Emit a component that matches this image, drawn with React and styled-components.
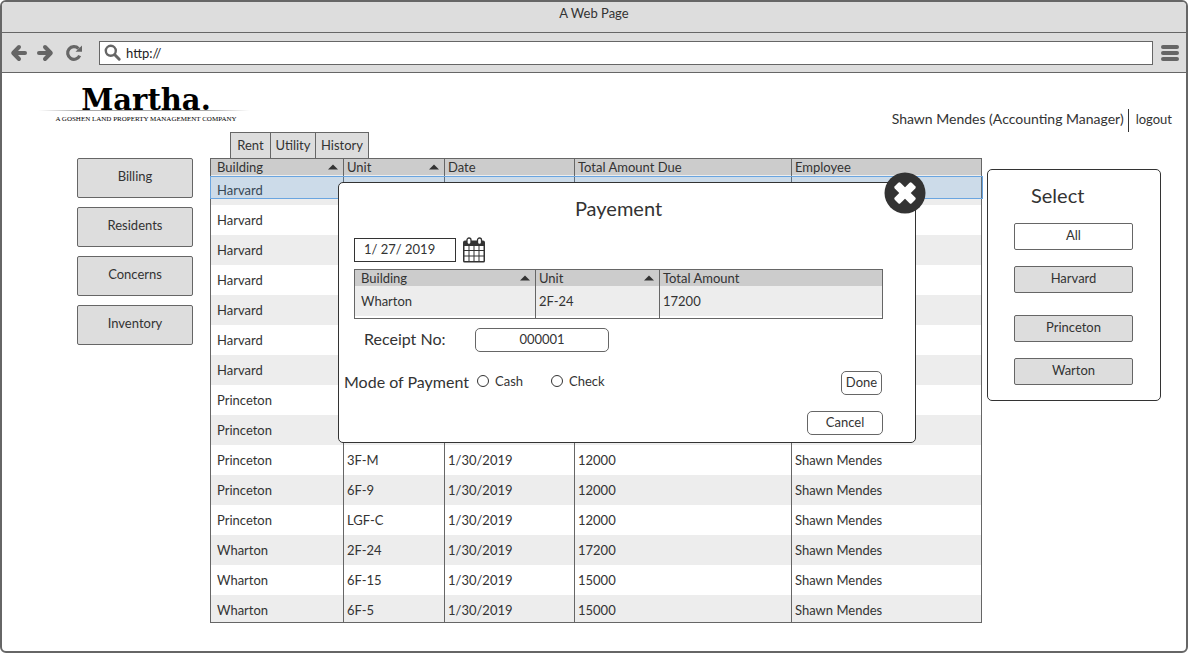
import React, { useState } from 'react';
import styled, { createGlobalStyle } from 'styled-components';

const Global = createGlobalStyle`
  *, *::before, *::after { box-sizing: border-box; }
  body { margin: 0; background: #fff; color: #333; font: 13px/16px Lato, "Liberation Sans", sans-serif; }
  button, input { font: inherit; color: inherit; margin: 0; }
  svg { display: block; }
`;

const Browser = styled.div`
  min-height: 100vh;
  border: 2px solid #666;
  border-radius: 6px;
  background: #fff;
  overflow: hidden;
`;
const TitleBar = styled.div`
  height: 31px;
  padding-top: 3px;
  text-align: center;
  background: #ddd;
  border-bottom: 1px solid #666;
`;
const Toolbar = styled.div`
  height: 40px;
  padding: 0 7px 0 8px;
  display: flex;
  align-items: center;
  gap: 8px;
  background: #ddd;
  border-bottom: 1px solid #666;
`;
const IconButton = styled.button`
  border: 0;
  padding: 0;
  background: none;
  color: #666;
  flex: none;
`;
const Reload = styled(IconButton)`
  margin: 0 8px 0 3px;
`;
const Address = styled.label`
  flex: 1;
  height: 24px;
  padding-left: 4px;
  display: flex;
  align-items: center;
  gap: 4px;
  color: #666;
  background: #fff;
  border: 1px solid #666;
  input { flex: 1; border: 0; padding: 0; outline: 0; background: none; color: #222; }
`;

const Header = styled.header`
  height: 59px;
  padding: 0 14px 0 36px;
  display: flex;
  justify-content: space-between;
  align-items: flex-end;
`;
const Logo = styled.div`
  width: 212px;
  padding-bottom: 9px;
  text-align: center;
  color: #000;
`;
const LogoName = styled.div`
  padding-left: 4px;
  font-family: "DejaVu Serif", serif;
  font-size: 29px;
  line-height: 20px;
  font-weight: 700;
`;
const LogoRule = styled.div`
  height: 1px;
  margin-bottom: 4px;
  background: linear-gradient(90deg, transparent, #aaa 20%, #aaa 80%, transparent);
`;
const LogoTag = styled.div`
  padding-left: 4px;
  font-family: "Liberation Serif", serif;
  font-size: 7px;
  line-height: 8px;
  white-space: nowrap;
`;
const Account = styled.div`
  display: flex;
  height: 23px;
  line-height: 20px;
  a { color: inherit; text-decoration: none; margin-left: 4px; padding-left: 7px; border-left: 1px solid #333; }
`;
const UserName = styled.span`
  font-size: 14px;
`;

const Main = styled.main`
  padding: 0 25px 28px 75px;
  display: flex;
  align-items: flex-start;
`;
const SideNav = styled.nav`
  width: 116px;
  margin: 26px 17px 0 0;
  display: flex;
  flex-direction: column;
  gap: 9px;
`;
const GreyButton = styled.button`
  height: ${p => (p.$tall ? 40 : 27)}px;
  padding: 0 0 4px;
  background: ${p => (p.$active ? '#fff' : '#ddd')};
  border: 1px solid #666;
  border-radius: 2px;
`;
const Records = styled.section`
  flex: 1;
  min-width: 0;
`;
const Tabs = styled.div`
  display: flex;
  padding-left: 20px;
`;
const Tab = styled.button`
  width: ${p => p.$width}px;
  height: 26px;
  padding: 0 0 2px;
  background: #ddd;
  border: 1px solid #666;
  border-width: 1px 1px 0 0;
  &:first-child { border-left-width: 1px; }
`;
const Stage = styled.div`
  position: relative;
`;
const TableBox = styled.div`
  border: 1px solid #666;
  overflow: hidden;
`;
const Table = styled.table`
  width: 100%;
  table-layout: fixed;
  border-spacing: 0;
  margin-bottom: ${p => p.$trim || 0}px;
  th, td { padding: 0 3px; text-align: left; font-weight: 400; border-right: 1px solid #666; white-space: nowrap; }
  th:first-child, td:first-child { padding-left: 6px; }
  th:last-child, td:last-child { border-right: 0; }
  th { height: 16px; padding-right: 5px; background: #ccc; }
  td { height: 30px; }
  tbody tr:nth-child(odd) { background: #ededed; }
`;
const HeadCell = styled.span`
  display: flex;
  align-items: center;
  justify-content: space-between;
`;
const Highlight = styled.div`
  position: absolute;
  top: 18px;
  left: 0;
  right: -1px;
  height: 23px;
  background: rgba(77, 152, 222, .2);
  border: 1px solid #6aa5e0;
`;

const Dialog = styled.form`
  position: absolute;
  top: 24px;
  left: 128px;
  right: 66px;
  padding: 14px 32px 7px 15px;
  background: #fff;
  border: 1px solid #333;
  border-radius: 5px;
`;
const DialogTitle = styled.h2`
  margin: 0;
  font-size: 20px;
  line-height: 22px;
  font-weight: 400;
  text-align: center;
`;
const Close = styled(IconButton)`
  position: absolute;
  top: -11px;
  right: -11px;
`;
const DateRow = styled.div`
  display: flex;
  align-items: center;
  gap: 6px;
  margin: 18px 0 6px;
`;
const DateInput = styled.input`
  width: 102px;
  height: 24px;
  padding: 0 9px 2px;
  border: 1px solid #333;
  background: #fff;
`;
const SummaryBox = styled(TableBox)`
  td { height: 32px; padding-bottom: 2px; }
  tbody tr:last-child { background: linear-gradient(#ededed 30px, #fff 30px); }
`;
const ReceiptRow = styled.div`
  display: flex;
  align-items: center;
  margin-top: 9px;
  padding-left: 10px;
  label { width: 111px; padding-bottom: 2px; font-size: 16px; }
`;
const ReceiptInput = styled.input`
  width: 134px;
  height: 24px;
  padding: 0 0 2px;
  text-align: center;
  background: #fff;
  border: 1px solid #666;
  border-radius: 5px;
`;
const ModeRow = styled.fieldset`
  display: flex;
  align-items: center;
  margin: 19px 0 0 -10px;
  padding: 0;
  border: 0;
`;
const ModeLabel = styled.span`
  width: 133px;
  padding-bottom: 2px;
  font-size: 16px;
`;
const Choice = styled.label`
  width: 74px;
  display: flex;
  align-items: center;
  gap: 6px;
  padding-bottom: 4px;
`;
const Radio = styled.input`
  appearance: none;
  width: 12px;
  height: 12px;
  border: 1px solid #333;
  border-radius: 50%;
  background: #fff;
  &:checked { box-shadow: inset 0 0 0 2px #fff; background: #333; }
`;
const RoundButton = styled.button`
  width: ${p => p.$width}px;
  height: 24px;
  padding: 0 0 2px;
  background: #fff;
  border: 1px solid #666;
  border-radius: 5px;
`;
const DoneButton = styled(RoundButton)`
  margin: 0 1px 0 auto;
`;
const CancelRow = styled.div`
  display: flex;
  justify-content: flex-end;
  margin-top: 16px;
`;

const SelectPanel = styled.aside`
  width: 174px;
  margin: 37px 0 0 5px;
  padding: 14px 27px 15px 26px;
  display: flex;
  flex-direction: column;
  border: 1px solid #333;
  border-radius: 5px;
`;
const PanelTitle = styled.h2`
  margin: 0 0 17px;
  padding-left: 17px;
  font-size: 20px;
  line-height: 22px;
  font-weight: 400;
`;
const Group = styled.div`
  display: flex;
  flex-direction: column;
  gap: 16px;
  & + & { margin-top: 22px; }
`;

const ArrowIcon = ({ flip }) => (
  <svg width="18" height="18" viewBox="0 0 18 18" fill="none" stroke="currentColor" strokeWidth="4" strokeLinejoin="round" transform={flip ? 'scale(-1,1)' : undefined}>
    <path d="M9 3 3.200 9 9 15" strokeLinecap="round" />
    <path d="M4 9h11" strokeLinecap="round" />
  </svg>
);
const ReloadIcon = () => (
  <svg width="18" height="18" viewBox="0 0 18 18">
    <path d="M13.500 4.600A6.300 6.300 0 1 0 14.700 11.600" fill="none" stroke="currentColor" strokeWidth="3.200" />
    <path d="M17 1.500v6.300H10.500z" fill="currentColor" />
  </svg>
);
const SearchIcon = () => (
  <svg width="18" height="18" viewBox="0 0 18 18" fill="none" stroke="currentColor">
    <circle cx="6.800" cy="6.800" r="5" strokeWidth="2.400" />
    <path d="m10.800 10.800 4.400 4.400" strokeWidth="3" strokeLinecap="round" />
  </svg>
);
const MenuIcon = () => (
  <svg width="18" height="18" viewBox="0 0 18 18" stroke="currentColor" strokeWidth="4" strokeLinecap="round">
    <path d="M2 3h14M2 9h14M2 15h14" />
  </svg>
);
const CalendarIcon = () => (
  <svg width="24" height="26" viewBox="0 0 24 26">
    <path d="M3 3.500h18a2 2 0 0 1 2 2V24a1.500 1.500 0 0 1-1.500 1.500h-19A1.500 1.500 0 0 1 1 24V5.500a2 2 0 0 1 2-2z" fill="#333" />
    <path d="M2.500 9h4v4h-4zM7.500 9h4v4h-4zM12.500 9h4v4h-4zM17.500 9h4v4h-4zM2.500 14h4v4.500h-4zM7.500 14h4v4.500h-4zM12.500 14h4v4.500h-4zM17.500 14h4v4.500h-4zM2.500 19.500h4v4.500h-4zM7.500 19.500h4v4.500h-4zM12.500 19.500h4v4.500h-4zM17.500 19.500h4v4.500h-4z" fill="#fff" />
    <rect x="5" y="1" width="4" height="6.500" rx="2" fill="#fff" stroke="#333" strokeWidth="1.300" />
    <rect x="15.500" y="1" width="4" height="6.500" rx="2" fill="#fff" stroke="#333" strokeWidth="1.300" />
  </svg>
);
const CloseIcon = () => (
  <svg width="42" height="42" viewBox="0 0 42 42">
    <circle cx="21" cy="21" r="20.500" fill="#333" />
    <g fill="#fff" transform="rotate(45 21 21)">
      <rect x="9" y="17" width="24" height="8" rx="1.500" />
      <rect x="17" y="9" width="8" height="24" rx="1.500" />
    </g>
  </svg>
);
const SortIcon = () => (
  <svg width="10" height="6" viewBox="0 0 10 6"><path d="M0 5.500 5 .5l5 5z" fill="#333" /></svg>
);

const rows = [
  ...Array.from({ length: 7 }, () => ['Harvard', '', '', '', '']),
  ['Princeton', '', '', '', ''],
  ['Princeton', '', '', '', ''],
  ['Princeton', '3F-M', '1/30/2019', '12000', 'Shawn Mendes'],
  ['Princeton', '6F-9', '1/30/2019', '12000', 'Shawn Mendes'],
  ['Princeton', 'LGF-C', '1/30/2019', '12000', 'Shawn Mendes'],
  ['Wharton', '2F-24', '1/30/2019', '17200', 'Shawn Mendes'],
  ['Wharton', '6F-15', '1/30/2019', '15000', 'Shawn Mendes'],
  ['Wharton', '6F-5', '1/30/2019', '15000', 'Shawn Mendes'],
];

function DataTable({ columns, data, trim }) {
  return (
    <Table $trim={trim}>
      <colgroup>{columns.map(c => <col key={c.name} width={c.width} />)}</colgroup>
      <thead>
        <tr>{columns.map(c => <th key={c.name} scope="col"><HeadCell>{c.name}{c.sort && <SortIcon />}</HeadCell></th>)}</tr>
      </thead>
      <tbody>
        {data.map((r, i) => <tr key={i}>{r.map((v, j) => <td key={j}>{v}</td>)}</tr>)}
      </tbody>
    </Table>
  );
}

const recordColumns = [
  { name: 'Building', width: 133, sort: true },
  { name: 'Unit', width: 101, sort: true },
  { name: 'Date', width: 130 },
  { name: 'Total Amount Due', width: 217 },
  { name: 'Employee' },
];
const summaryColumns = [
  { name: 'Building', width: 181, sort: true },
  { name: 'Unit', width: 124, sort: true },
  { name: 'Total Amount' },
];

function PaymentDialog() {
  return (
    <Dialog role="dialog" aria-labelledby="payment-title" onSubmit={e => e.preventDefault()}>
      <Close type="button" aria-label="Close"><CloseIcon /></Close>
      <DialogTitle id="payment-title">Payement</DialogTitle>
      <DateRow>
        <DateInput aria-label="Payment date" defaultValue="1/ 27/ 2019" />
        <IconButton type="button" aria-label="Pick a date"><CalendarIcon /></IconButton>
      </DateRow>
      <SummaryBox><DataTable columns={summaryColumns} data={[['Wharton', '2F-24', '17200']]} /></SummaryBox>
      <ReceiptRow>
        <label htmlFor="receipt">Receipt No:</label>
        <ReceiptInput id="receipt" defaultValue="000001" />
      </ReceiptRow>
      <ModeRow aria-labelledby="mode">
        <ModeLabel id="mode">Mode of Payment</ModeLabel>
        <Choice><Radio type="radio" name="mode" />Cash</Choice>
        <Choice><Radio type="radio" name="mode" />Check</Choice>
        <DoneButton type="submit" $width={41}>Done</DoneButton>
      </ModeRow>
      <CancelRow><RoundButton type="button" $width={76}>Cancel</RoundButton></CancelRow>
    </Dialog>
  );
}

export default function App() {
  const [building, setBuilding] = useState('All');
  const filter = name => (
    <GreyButton key={name} $active={building === name} onClick={() => setBuilding(name)}>{name}</GreyButton>
  );
  return (
    <>
      <Global />
      <Browser>
        <TitleBar>A Web Page</TitleBar>
        <Toolbar>
          <IconButton aria-label="Back"><ArrowIcon /></IconButton>
          <IconButton aria-label="Forward"><ArrowIcon flip /></IconButton>
          <Reload aria-label="Reload"><ReloadIcon /></Reload>
          <Address><SearchIcon /><input aria-label="Address" defaultValue="http://" /></Address>
          <IconButton aria-label="Menu"><MenuIcon /></IconButton>
        </Toolbar>
        <Header>
          <Logo>
            <LogoName>Martha.</LogoName>
            <LogoRule />
            <LogoTag>A GOSHEN LAND PROPERTY MANAGEMENT COMPANY</LogoTag>
          </Logo>
          <Account><UserName>Shawn Mendes (Accounting Manager)</UserName><a href="#logout">logout</a></Account>
        </Header>
        <Main>
          <SideNav>
            {['Billing', 'Residents', 'Concerns', 'Inventory'].map(n => <GreyButton key={n} $tall>{n}</GreyButton>)}
          </SideNav>
          <Records>
            <Tabs><Tab $width={41}>Rent</Tab><Tab $width={45}>Utility</Tab><Tab $width={53}>History</Tab></Tabs>
            <Stage>
              <TableBox>
                <DataTable columns={recordColumns} data={rows} trim={-3} />
              </TableBox>
              <Highlight />
              <PaymentDialog />
            </Stage>
          </Records>
          <SelectPanel>
            <PanelTitle>Select</PanelTitle>
            <Group>{['All', 'Harvard'].map(filter)}</Group>
            <Group>{['Princeton', 'Warton'].map(filter)}</Group>
          </SelectPanel>
        </Main>
      </Browser>
    </>
  );
}
